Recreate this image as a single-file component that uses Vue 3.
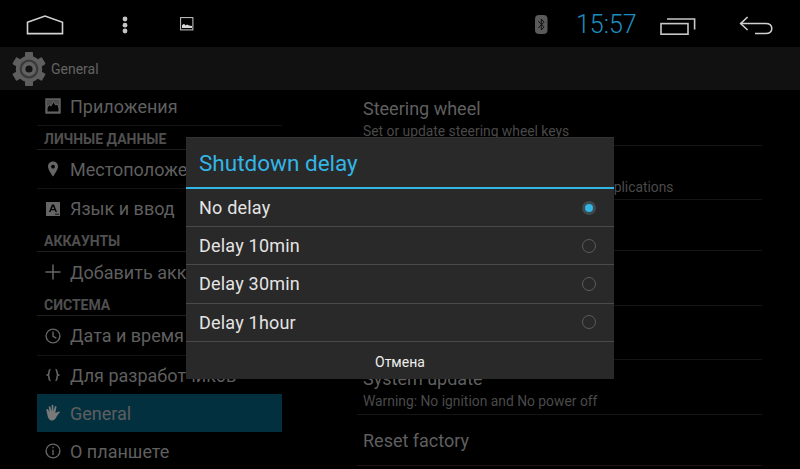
<script setup>
const leftItems = [
  { type: 'row', icon: 'apps', label: 'Приложения' },
  { type: 'head', label: 'ЛИЧНЫЕ ДАННЫЕ' },
  { type: 'row', icon: 'pin', label: 'Местоположение' },
  { type: 'row', icon: 'lang', label: 'Язык и ввод', last: true, wide: true },
  { type: 'head', label: 'АККАУНТЫ' },
  { type: 'row', icon: 'plus', label: 'Добавить аккаунт', tall: true, last: true },
  { type: 'head', label: 'СИСТЕМА' },
  { type: 'row', icon: 'clock', label: 'Дата и время', wide: true },
  { type: 'row', icon: 'braces', label: 'Для разработчиков', last: true },
  { type: 'row', icon: 'hand', label: 'General', active: true },
  { type: 'row', icon: 'info', label: 'О планшете', last: true }
]

const rightItems = [
  { title: 'Steering wheel', sub: 'Set or update steering wheel keys', h: 56 },
  { title: 'Default apps', sub: 'Set or update the preferred navigation applications', h: 54 },
  { title: '', sub: '', h: 51 },
  { title: '', sub: '', h: 55 },
  { title: '', sub: '', h: 54 },
  { title: 'System update', sub: 'Warning: No ignition and No power off', h: 55 },
  { title: 'Reset factory', sub: '', h: 51 }
]

const options = [
  { label: 'No delay', checked: true },
  { label: 'Delay 10min', checked: false },
  { label: 'Delay 30min', checked: false },
  { label: 'Delay 1hour', checked: false }
]
</script>

<template>
  <div class="screen">
    <header class="status">
      <svg class="home" width="38" height="20" viewBox="0 0 38 20" fill="none" stroke="#d2d2d2" stroke-width="1.6">
        <path d="M1.5 7.2 19 1 36.500 7.2V18.600H1.500Z" />
      </svg>
      <svg class="dots" width="6" height="18" viewBox="0 0 6 18" fill="#c4c4c4">
        <circle cx="3" cy="3" r="2.4" />
        <circle cx="3" cy="9.2" r="2.4" />
        <circle cx="3" cy="15" r="2.4" />
      </svg>
      <svg class="shot" width="14" height="14" viewBox="0 0 14 14">
        <rect x=".6" y=".6" width="12.3" height="12.3" fill="none" stroke="#c8c8c8" stroke-width="1" />
        <path d="M2 11V8.2L4 6.8 5.6 8.4 7 7.6 9 8.6 12 9V11Z" fill="#d8d8d8" />
      </svg>
      <svg class="bt" width="13" height="19" viewBox="0 0 13 19">
        <rect width="12.5" height="19" rx="4" fill="#5a5a5a" />
        <path d="M3.2 6 9 11.8 6.3 15V4L9 7.2 3.2 13" fill="none" stroke="#111" stroke-width="1" />
      </svg>
      <span class="time">15:57</span>
      <svg class="recent" width="36" height="19" viewBox="0 0 36 19" fill="none" stroke="#c8c8c8" stroke-width="1.6">
        <rect x="1" y="7.6" width="27" height="10.6" />
        <path d="M7 3H34.6V13.5" />
      </svg>
      <svg class="back" width="35" height="19" viewBox="0 0 35 19" fill="none" stroke="#d0d0d0" stroke-width="1.5">
        <path d="M8.6 1 1.6 7.6 8.6 14" />
        <path d="M1.6 7.6H26.5C30.5 7.6 32.8 9.6 32.8 12.6 32.8 15.6 30.5 17.6 26.5 17.6H16" />
      </svg>
    </header>

    <div class="titlebar">
      <svg class="gear" width="34" height="36" viewBox="0 0 34 36">
        <g fill="#5e5e5e">
          <circle cx="17" cy="18" r="13.2" />
          <rect x="13" y="1" width="8" height="34" rx="1" />
          <rect x="13" y="1" width="8" height="34" rx="1" transform="rotate(60 17 18)" />
          <rect x="13" y="1" width="8" height="34" rx="1" transform="rotate(120 17 18)" />
        </g>
        <circle cx="17" cy="18" r="9.4" fill="#3a3a3a" />
        <circle cx="17" cy="18" r="7.2" fill="#616161" />
        <circle cx="17" cy="18" r="3.6" fill="#141414" />
      </svg>
      <span>General</span>
    </div>

    <main class="content">
      <nav class="left">
        <template v-for="item in leftItems" :key="item.label">
          <div v-if="item.type === 'head'" class="head">{{ item.label }}</div>
          <div v-else class="row" :class="{ active: item.active, last: item.last, tall: item.tall, wide: item.wide }">
            <svg class="ico" width="18" height="18" viewBox="0 0 18 18" fill="none" stroke="#666" stroke-width="1.4">
              <template v-if="item.icon === 'apps'">
                <rect x="2" y="2" width="14" height="14" fill="#4c4c4c" stroke="#666" />
                <path d="M3 15V11L5 7.500 7 9 9.500 4.500 11.500 8 13.500 7 15 11V15Z" fill="#000" stroke="#666" stroke-width="1" />
              </template>
              <path v-else-if="item.icon === 'pin'" fill-rule="evenodd" stroke="none" fill="#666" d="M9 1.500C5.700 1.500 4 4 4 6.500 4 10 9 16.500 9 16.500S14 10 14 6.500C14 4 12.300 1.500 9 1.500ZM9 4.800A1.900 1.900 0 1 1 9 8.600 1.900 1.900 0 0 1 9 4.800Z" />
              <template v-else-if="item.icon === 'lang'">
                <path fill-rule="evenodd" stroke="none" fill="#666" d="M2 2H16V16H2ZM8 4.500 5 12H6.600L7.200 10.300H10.800L11.400 12H13L10 4.500ZM9 6.300 10.300 9H7.700Z" />
                <path d="M11 14.200H15" stroke="#000" stroke-width=".8" />
              </template>
              <path v-else-if="item.icon === 'plus'" d="M9 1.500V16.500M1.500 9H16.500" stroke-width="1.5" />
              <template v-else-if="item.icon === 'clock'">
                <circle cx="9" cy="9" r="6.900" />
                <path d="M9 4.500V9.300L12.300 11.200" />
              </template>
              <path v-else-if="item.icon === 'braces'" stroke-width="1.6" d="M6.500 3.500C4.500 3.500 5.200 7.800 4.500 8.500L3.500 9 4.500 9.500C5.200 10.200 4.500 14.500 6.500 14.500M11.500 3.500C13.500 3.500 12.800 7.800 13.500 8.500L14.500 9 13.500 9.500C12.800 10.200 13.500 14.500 11.500 14.500" />
              <path v-else-if="item.icon === 'hand'" stroke="none" fill="#7a7a7a" d="M3 5c.6-.3 1 .1 1.300.8L5.500 8.500 4.800 3.500C4.700 2.700 5 2.200 5.500 2.200S6.300 2.600 6.500 3.300L7.500 7.500 7.700 1.800C7.700 1 8.100.7 8.600.7S9.400 1.100 9.400 1.800V7.500L10.800 2.800C11 2.200 11.500 1.900 12 2.100 12.500 2.300 12.600 2.800 12.400 3.500L11.300 9C12.200 8.500 13.500 7.800 14.800 7.500 15.700 7.300 16.200 8 15.600 8.700 14.600 9.700 13.200 11.400 12.300 13.200 11.400 15 10 16.500 8 16.500 5.500 16.500 4.300 14.500 3.800 12.500L2.400 6.500C2.300 5.800 2.500 5.300 3 5Z" />
              <template v-else-if="item.icon === 'info'">
                <circle cx="9" cy="9" r="6.900" />
                <path d="M9 7.800V13M9 4.800V6.200" />
              </template>
            </svg>
            <span>{{ item.label }}</span>
          </div>
        </template>
      </nav>

      <section class="right">
        <div v-for="(item, i) in rightItems" :key="i" class="pref" :class="{ single: item.title && !item.sub }" :style="{ height: item.h + 'px' }">
          <div v-if="item.title" class="pref-title">{{ item.title }}</div>
          <div v-if="item.sub" class="pref-sub">{{ item.sub }}</div>
        </div>
      </section>
    </main>

    <div class="dialog">
      <h2 class="dialog-title">Shutdown delay</h2>
      <div v-for="opt in options" :key="opt.label" class="option">
        <span>{{ opt.label }}</span>
        <span class="radio" :class="{ checked: opt.checked }"></span>
      </div>
      <div class="cancel"><span>Отмена</span></div>
    </div>
  </div>
</template>

<style>
html,
body {
  margin: 0;
  background: #000;
}
</style>

<style scoped>
.screen {
  position: relative;
  width: 800px;
  height: 469px;
  overflow: hidden;
  background: #000;
  font-family: Roboto, "Liberation Sans", sans-serif;
  display: flex;
  flex-direction: column;
}

.status {
  flex: none;
  height: 47px;
  display: flex;
  align-items: flex-start;
}
.home { margin: 15px 0 0 26px; }
.dots { margin: 16px 0 0 58px; }
.shot { margin: 17px 0 0 52px; }
.bt { margin: 15px 0 0 341px; }
.time {
  margin: 10px 0 0 28px;
  width: 62px;
  color: #1d8ec0;
  font-size: 25px;
  font-weight: 300;
  line-height: 29px;
  white-space: nowrap;
}
.recent { margin: 16px 0 0 22px; }
.back { margin: 16px 0 0 43px; }

.titlebar {
  flex: none;
  height: 43px;
  background: #111;
  display: flex;
  align-items: center;
  color: #636363;
  font-size: 14px;
}
.gear { margin: 0 5px 0 12px; }

.content {
  flex: 1;
  min-height: 0;
  display: flex;
  align-items: flex-start;
}

.left {
  width: 245px;
  margin: -3px 0 0 37px;
  flex: none;
}
.head {
  height: 23px;
  line-height: 26px;
  padding-left: 7px;
  font-size: 14px;
  font-weight: 700;
  color: #4f4f4f;
  border-bottom: 1px solid #1e1e1e;
  white-space: nowrap;
}
.row {
  height: 38px;
  display: flex;
  align-items: center;
  border-bottom: 1px solid #141414;
  color: #5f5f5f;
  font-size: 18px;
  white-space: nowrap;
}
.row.last { border-bottom: 0; }
.row.wide { height: 39px; }
.row.tall { height: 40px; }
.row.active {
  height: 38px;
  border-bottom: 0;
  background: #03303f;
}
.ico {
  flex: none;
  margin: 0 8px 0 7px;
}

.right {
  width: 405px;
  margin-left: 75px;
  flex: none;
}
.pref {
  box-sizing: border-box;
  padding: 8px 0 0 6px;
  border-bottom: 1px solid #151515;
}
.pref.single { padding-top: 15px; }
.pref-title {
  color: #5f5f5f;
  font-size: 18px;
  line-height: 22px;
  white-space: nowrap;
}
.pref-sub {
  color: #4a4a4a;
  font-size: 13.85px;
  line-height: 22px;
  white-space: nowrap;
}

.dialog {
  position: absolute;
  left: 186px;
  top: 137px;
  width: 428px;
  height: 242px;
  background: #292929;
  border-top: 1px solid #333;
  box-sizing: border-box;
  display: flex;
  flex-direction: column;
}
.dialog-title {
  margin: 0;
  height: 49px;
  line-height: 51px;
  padding-left: 13px;
  border-bottom: 2px solid #33b5e5;
  color: #33b5e5;
  font-size: 22.5px;
  font-weight: 400;
}
.option {
  height: 37.2px;
  padding: 0 18px 0 13px;
  display: flex;
  align-items: center;
  justify-content: space-between;
  border-bottom: 1px solid #4a4a4a;
  color: #e4e4e4;
  font-size: 18px;
  letter-spacing: .2px;
}
.radio {
  box-sizing: border-box;
  width: 14px;
  height: 14px;
  border-radius: 50%;
  border: 1px solid #5c5c5c;
}
.radio.checked {
  border: 3px solid #3d4a50;
  background: #33b5e5;
}
.cancel {
  flex: 1;
  display: flex;
  align-items: center;
  padding-top: 3px;
  color: #eee;
  font-size: 14px;
}
.cancel span { margin-left: 189px; }
</style>
